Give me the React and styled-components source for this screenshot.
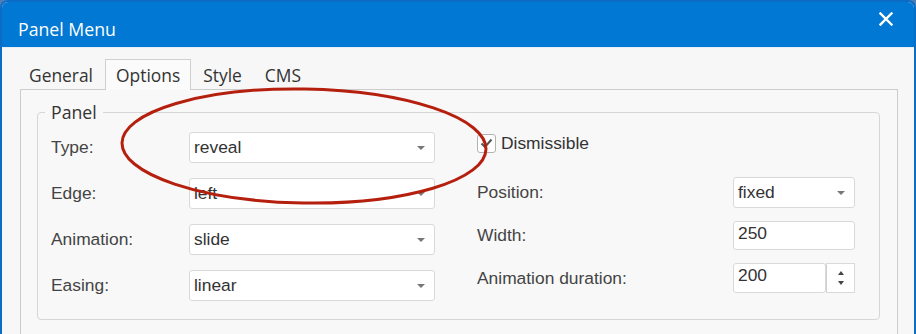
import React from "react";
import styled, { createGlobalStyle } from "styled-components";

const GlobalStyle = createGlobalStyle`
  html, body {
    margin: 0;
    padding: 0;
    overflow: hidden;
    background: #4f7eb3;
  }
  body {
    font-family: "Open Sans", "Noto Sans", sans-serif;
  }
`;

const Screen = styled.div`
  position: relative;
  width: 916px;
  height: 334px;
`;

const Dialog = styled.div`
  box-sizing: border-box;
  width: 916px;
  height: 334px;
  border: 2px solid #0b6cc6;
  border-bottom: none;
  border-radius: 8px 8px 0 0;
  background: #f7f7f7;
  overflow: hidden;
`;

const TitleBar = styled.div`
  height: 45px;
  display: flex;
  justify-content: space-between;
  align-items: flex-start;
  background: #0078d4;
  color: #fff;
  padding-left: 16px;
  border-bottom: 1px solid #e8eef5;
  h1 {
    margin: 18px 0 0;
    font-size: 17.7px;
    line-height: 18px;
    font-weight: 400;
  }
`;

const CloseButton = styled.button`
  border: none;
  background: none;
  padding: 0;
  margin: 10px 21px 0 0;
  width: 14px;
  height: 14px;
  display: flex;
`;

const Body = styled.div`
  padding: 11px 16px 0 18px;
`;

const TabList = styled.div`
  display: flex;
  margin-left: -2px;
  position: relative;
  z-index: 1;
`;

const Tab = styled.div`
  box-sizing: border-box;
  height: 31px;
  padding: 1px 10px 0;
  margin-right: 1px;
  margin-bottom: -1px;
  font-size: 17.4px;
  line-height: 28px;
  color: #333;
  border: 1px solid ${({ $active }) => ($active ? "#cfcfcf" : "transparent")};
  border-bottom: none;
  background: ${({ $active }) => ($active ? "#fbfbfb" : "transparent")};
`;

const TabPanel = styled.div`
  border: 1px solid #cccccc;
  background: #f8f8f8;
  padding: 10px 17px 0 16px;
  height: 260px;
`;

const Fieldset = styled.fieldset`
  margin: 0;
  padding: 0 0 0 7px;
  border: 1px solid #d6d6d6;
  border-radius: 4px;
  legend {
    padding: 0 6px;
    font-size: 17.7px;
    line-height: 24px;
    color: #333;
  }
`;

const Content = styled.div`
  display: flex;
  gap: 42px;
  padding: 8px 23px 18px 6px;
  font-family: "Liberation Sans", Arial, sans-serif;
  font-size: 17.4px;
  color: #444;
`;

const Column = styled.div`
  display: flex;
  flex-direction: column;
  gap: ${({ $gap }) => $gap}px;
`;

const Row = styled.div`
  display: grid;
  grid-template-columns: ${({ $label }) => $label}px ${({ $field }) => $field}px;
  align-items: center;
`;

const Select = styled.div`
  box-sizing: border-box;
  height: ${({ $h }) => $h || 31}px;
  display: flex;
  align-items: center;
  justify-content: space-between;
  padding: 0 9px 0 4px;
  background: #fff;
  border: 1px solid #d9d9d9;
  border-radius: 3px;
  color: #333;
  &::after {
    content: "";
    width: 0;
    height: 0;
    border-left: 4.5px solid transparent;
    border-right: 4.5px solid transparent;
    border-top: 4px solid #777;
  }
`;

const Input = styled.div`
  box-sizing: border-box;
  height: ${({ $h }) => $h}px;
  flex: 1;
  padding: 0 4px;
  line-height: 22px;
  background: #fff;
  border: 1px solid #d9d9d9;
  border-radius: 3px;
  color: #333;
`;

const SpinGroup = styled.div`
  display: flex;
`;

const Spinner = styled.div`
  box-sizing: border-box;
  width: 29px;
  height: 30px;
  display: flex;
  flex-direction: column;
  align-items: center;
  justify-content: center;
  gap: 6px;
  background: #fff;
  border: 1px solid #d9d9d9;
  border-left-color: #cfcfcf;
`;

const Arrow = styled.span`
  width: 0;
  height: 0;
  border-left: 3.5px solid transparent;
  border-right: 3.5px solid transparent;
  ${({ $up }) =>
    $up ? "border-bottom: 4px solid #444;" : "border-top: 4px solid #444;"}
`;

const CheckRow = styled.label`
  display: flex;
  align-items: center;
  gap: 5px;
  height: 19px;
  margin: 2px 0 11px;
  color: #333;
`;

const Box = styled.span`
  box-sizing: border-box;
  width: 19px;
  height: 19px;
  display: flex;
  align-items: center;
  justify-content: center;
  background: #fff;
  border: 1px solid #b3b3b3;
  border-radius: 3px;
`;

const Overlay = styled.svg`
  position: absolute;
  left: 0;
  top: 0;
  pointer-events: none;
`;

const leftRows = [
  ["Type:", "reveal"],
  ["Edge:", "left"],
  ["Animation:", "slide"],
  ["Easing:", "linear"],
];

export default function App() {
  return (
    <>
      <GlobalStyle />
      <Screen>
        <Dialog>
          <TitleBar>
            <h1>Panel Menu</h1>
            <CloseButton aria-label="Close">
              <svg width="14" height="14" viewBox="0 0 14 14">
                <path
                  d="M1.5 1.5 L12.5 12.5 M12.5 1.5 L1.5 12.5"
                  stroke="#fff"
                  strokeWidth="2.4"
                  strokeLinecap="square"
                />
              </svg>
            </CloseButton>
          </TitleBar>
          <Body>
            <TabList>
              <Tab>General</Tab>
              <Tab $active>Options</Tab>
              <Tab>Style</Tab>
              <Tab>CMS</Tab>
            </TabList>
            <TabPanel>
              <Fieldset>
                <legend>Panel</legend>
                <Content>
                  <Column $gap={15}>
                    {leftRows.map(([label, value]) => (
                      <Row key={label} $label={138} $field={246}>
                        <span>{label}</span>
                        <Select>{value}</Select>
                      </Row>
                    ))}
                  </Column>
                  <Column $gap={13}>
                    <CheckRow>
                      <Box>
                        <svg width="13" height="11" viewBox="0 0 13 11">
                          <path
                            d="M1.5 5.5 L5 9 L11.5 1.5"
                            fill="none"
                            stroke="#555"
                            strokeWidth="2"
                          />
                        </svg>
                      </Box>
                      Dismissible
                    </CheckRow>
                    <Row $label={256} $field={122}>
                      <span>Position:</span>
                      <Select>fixed</Select>
                    </Row>
                    <Row $label={256} $field={122}>
                      <span>Width:</span>
                      <SpinGroup>
                        <Input $h={29}>250</Input>
                      </SpinGroup>
                    </Row>
                    <Row $label={256} $field={122}>
                      <span>Animation duration:</span>
                      <SpinGroup>
                        <Input $h={30}>200</Input>
                        <Spinner>
                          <Arrow $up />
                          <Arrow />
                        </Spinner>
                      </SpinGroup>
                    </Row>
                  </Column>
                </Content>
              </Fieldset>
            </TabPanel>
          </Body>
        </Dialog>
        <Overlay width="916" height="334">
          <ellipse
            cx="304"
            cy="146"
            rx="182"
            ry="57"
            fill="none"
            stroke="#b5200e"
            strokeWidth="3"
            transform="rotate(1 304 146)"
          />
        </Overlay>
      </Screen>
    </>
  );
}
